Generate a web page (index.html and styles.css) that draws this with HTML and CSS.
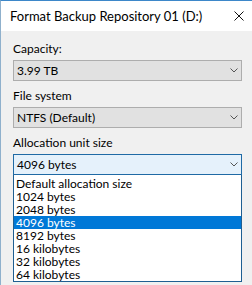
FILE: index.html
```html
<!DOCTYPE html>
<html>
<head>
<meta charset="utf-8">
<link rel="stylesheet" href="styles.css">
</head>
<body>
<div class="window">
  <div class="titlebar">
    <span class="title">Format Backup Repository 01 (D:)</span>
    <svg class="close" width="10" height="10" viewBox="0 0 10 10"><path d="M0.5 0.5L9.5 9.5M9.5 0.5L0.5 9.5" stroke="#111" stroke-width="1" fill="none"/></svg>
  </div>
  <div class="content">
    <div class="group">
      <div class="label">Capacity:</div>
      <div class="combo">
        <span>3.99 TB</span>
        <svg class="chev" width="8" height="5" viewBox="0 0 8 5"><path d="M0.5 0.5L4 4L7.5 0.5" stroke="#555" stroke-width="1" fill="none"/></svg>
      </div>
    </div>
    <div class="group">
      <div class="label">File system</div>
      <div class="combo">
        <span>NTFS (Default)</span>
        <svg class="chev" width="8" height="5" viewBox="0 0 8 5"><path d="M0.5 0.5L4 4L7.5 0.5" stroke="#555" stroke-width="1" fill="none"/></svg>
      </div>
    </div>
    <div class="group">
      <div class="label">Allocation unit size</div>
      <div class="combo focused">
        <span>4096 bytes</span>
        <svg class="chev" width="8" height="5" viewBox="0 0 8 5"><path d="M0.5 0.5L4 4L7.5 0.5" stroke="#555" stroke-width="1" fill="none"/></svg>
      </div>
      <ul class="list">
        <li>Default allocation size</li>
        <li>1024 bytes</li>
        <li>2048 bytes</li>
        <li class="selected">4096 bytes</li>
        <li>8192 bytes</li>
        <li>16 kilobytes</li>
        <li>32 kilobytes</li>
        <li>64 kilobytes</li>
      </ul>
    </div>
  </div>
</div>
</body>
</html>
```

FILE: styles.css
```css
html, body {
  margin: 0;
  padding: 0;
  background: #f0f0f0;
}
body {
  width: 252px;
  height: 285px;
  overflow: hidden;
  font-family: "Lato", "Liberation Sans", Arial, sans-serif;
  font-size: 12px;
  color: #000;
}
.window {
  height: 284px;
  border-top: 1px solid #3d87c9;
  border-left: 1px solid #8fb0cc;
  background: #f0f0f0;
}
.titlebar {
  height: 30px;
  background: #fff;
  display: flex;
  align-items: center;
  justify-content: space-between;
  padding: 0 8px 0 9px;
}
.title {
  font-size: 13px;
  color: #000;
}
.close {
  display: block;
}
.content {
  padding: 10px 10px 0 12px;
}
.group {
  margin-bottom: 7px;
}
.label {
  height: 16px;
  line-height: 16px;
  margin-bottom: 3px;
}
.combo {
  height: 19px;
  border: 1px solid #adadad;
  background: #e1e1e1;
  display: flex;
  align-items: center;
  justify-content: space-between;
  padding: 0 3px 0 3px;
}
.combo span {
  line-height: 19px;
}
.chev {
  display: block;
}
.combo.focused {
  border-color: #1f6aa5;
  background: #e5f1fb;
}
.list {
  list-style: none;
  margin: 0;
  padding: 2px 0 0 0;
  border: 1px solid #1f5f92;
  border-top: none;
  background: #fff;
}
.list li {
  height: 13px;
  line-height: 13px;
  padding-left: 2px;
}
.list li.selected {
  background: #0078d7;
  color: #fff;
}
```
